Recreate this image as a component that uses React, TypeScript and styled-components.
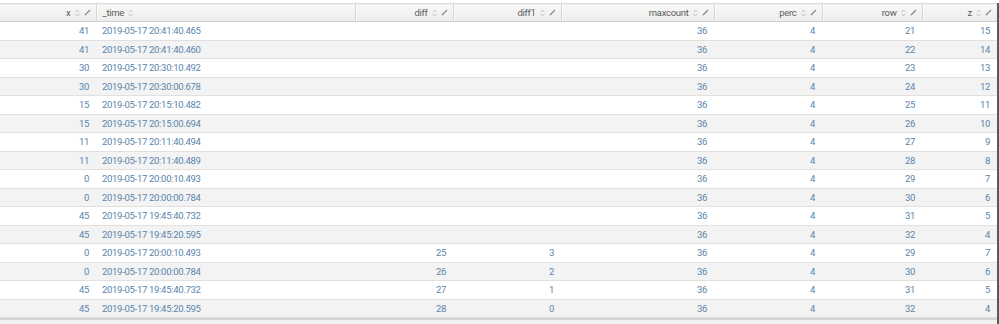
import React from "react";
import styled, { createGlobalStyle } from "styled-components";

const Global = createGlobalStyle`
  html, body { margin: 0; padding: 0; background: #fff; }
  body { font-family: "Roboto", "Liberation Sans", sans-serif; }
`;

const Page = styled.div`
  width: 999px;
  height: 324px;
  padding-top: 3px;
  box-sizing: border-box;
  display: flex;
  flex-direction: column;
  overflow: hidden;
`;

const Frame = styled.div`
  width: 997px;
  border-right: 2px solid #5a5a5a;
  display: flex;
  flex-direction: column;
  flex: 1;
`;

const Table = styled.table`
  width: 997px;
  table-layout: fixed;
  border-collapse: collapse;
  font-size: 9.5px;
  letter-spacing: -0.3px;
`;

const HeadRow = styled.tr`
  height: 18px;
  background: linear-gradient(#f8f8f8, #ededed);
  border-top: 1px solid #dcdcdc;
  border-bottom: 1px solid #cfcfcf;
`;

const Th = styled.th<{ $left?: boolean; $first?: boolean }>`
  padding: 0 5px 0 ${(p) => (p.$left ? "6px" : "4px")};
  font-weight: normal;
  color: #5c5c5c;
  border-left: ${(p) => (p.$first ? "none" : "1px solid #d6d6d6")};
  box-shadow: ${(p) => (p.$first ? "none" : "inset 1px 0 0 #fbfbfb")};
  white-space: nowrap;
  overflow: hidden;
`;

const HeadInner = styled.div<{ $left?: boolean }>`
  display: flex;
  align-items: center;
  justify-content: ${(p) => (p.$left ? "flex-start" : "flex-end")};
  gap: 4px;
`;

const Row = styled.tr<{ $alt: boolean }>`
  height: 18.5px;
  background: ${(p) => (p.$alt ? "#f3f3f3" : "#fff")};
  border-bottom: 1px solid #e0e0e0;
`;

const Td = styled.td<{ $left?: boolean }>`
  padding: 0 ${(p) => (p.$left ? "0" : "7px")} 0 ${(p) => (p.$left ? "6px" : "0")};
  text-align: ${(p) => (p.$left ? "left" : "right")};
  color: #5985ab;
  white-space: nowrap;
  overflow: hidden;
`;

const Footer = styled.div`
  flex: 1;
  border-top: 2px solid #d4d4d4;
  background: #f1f1f1;
`;

const SortIcon = () => (
  <svg width="5" height="8" viewBox="0 0 5 8" fill="none" stroke="#bdbdbd" strokeWidth="0.9">
    <path d="M0.7 3.2 L2.5 1 L4.3 3.2" />
    <path d="M0.7 4.8 L2.5 7 L4.3 4.8" />
  </svg>
);

const PencilIcon = () => (
  <svg width="7" height="7" viewBox="0 0 7 7" fill="none">
    <path d="M1 6 L6 1" stroke="#8a8a8a" strokeWidth="1.2" />
    <path d="M0.6 6.4 L1.6 6.1 L0.9 5.4 Z" fill="#8a8a8a" />
  </svg>
);

type Col = { key: string; width: number; left?: boolean; edit?: boolean };

const cols: Col[] = [
  { key: "x", width: 96, edit: true },
  { key: "_time", width: 259, left: true },
  { key: "diff", width: 98, edit: true },
  { key: "diff1", width: 108, edit: true },
  { key: "maxcount", width: 153, edit: true },
  { key: "perc", width: 108, edit: true },
  { key: "row", width: 100, edit: true },
  { key: "z", width: 75, edit: true },
];

const rows: string[][] = [
  ["41", "2019-05-17 20:41:40.465", "", "", "36", "4", "21", "15"],
  ["41", "2019-05-17 20:41:40.460", "", "", "36", "4", "22", "14"],
  ["30", "2019-05-17 20:30:10.492", "", "", "36", "4", "23", "13"],
  ["30", "2019-05-17 20:30:00.678", "", "", "36", "4", "24", "12"],
  ["15", "2019-05-17 20:15:10.482", "", "", "36", "4", "25", "11"],
  ["15", "2019-05-17 20:15:00.694", "", "", "36", "4", "26", "10"],
  ["11", "2019-05-17 20:11:40.494", "", "", "36", "4", "27", "9"],
  ["11", "2019-05-17 20:11:40.489", "", "", "36", "4", "28", "8"],
  ["0", "2019-05-17 20:00:10.493", "", "", "36", "4", "29", "7"],
  ["0", "2019-05-17 20:00:00.784", "", "", "36", "4", "30", "6"],
  ["45", "2019-05-17 19:45:40.732", "", "", "36", "4", "31", "5"],
  ["45", "2019-05-17 19:45:20.595", "", "", "36", "4", "32", "4"],
  ["0", "2019-05-17 20:00:10.493", "25", "3", "36", "4", "29", "7"],
  ["0", "2019-05-17 20:00:00.784", "26", "2", "36", "4", "30", "6"],
  ["45", "2019-05-17 19:45:40.732", "27", "1", "36", "4", "31", "5"],
  ["45", "2019-05-17 19:45:20.595", "28", "0", "36", "4", "32", "4"],
];

export default function App() {
  return (
    <Page>
      <Global />
      <Frame>
        <Table>
          <colgroup>
            {cols.map((c) => (
              <col key={c.key} style={{ width: c.width }} />
            ))}
          </colgroup>
          <thead>
            <HeadRow>
              {cols.map((c, i) => (
                <Th key={c.key} $left={c.left} $first={i === 0}>
                  <HeadInner $left={c.left}>
                    <span>{c.key}</span>
                    <SortIcon />
                    {c.edit && <PencilIcon />}
                  </HeadInner>
                </Th>
              ))}
            </HeadRow>
          </thead>
          <tbody>
            {rows.map((r, ri) => (
              <Row key={ri} $alt={ri % 2 === 1}>
                {r.map((v, ci) => (
                  <Td key={ci} $left={cols[ci].left}>
                    {v}
                  </Td>
                ))}
              </Row>
            ))}
          </tbody>
        </Table>
        <Footer />
      </Frame>
    </Page>
  );
}
